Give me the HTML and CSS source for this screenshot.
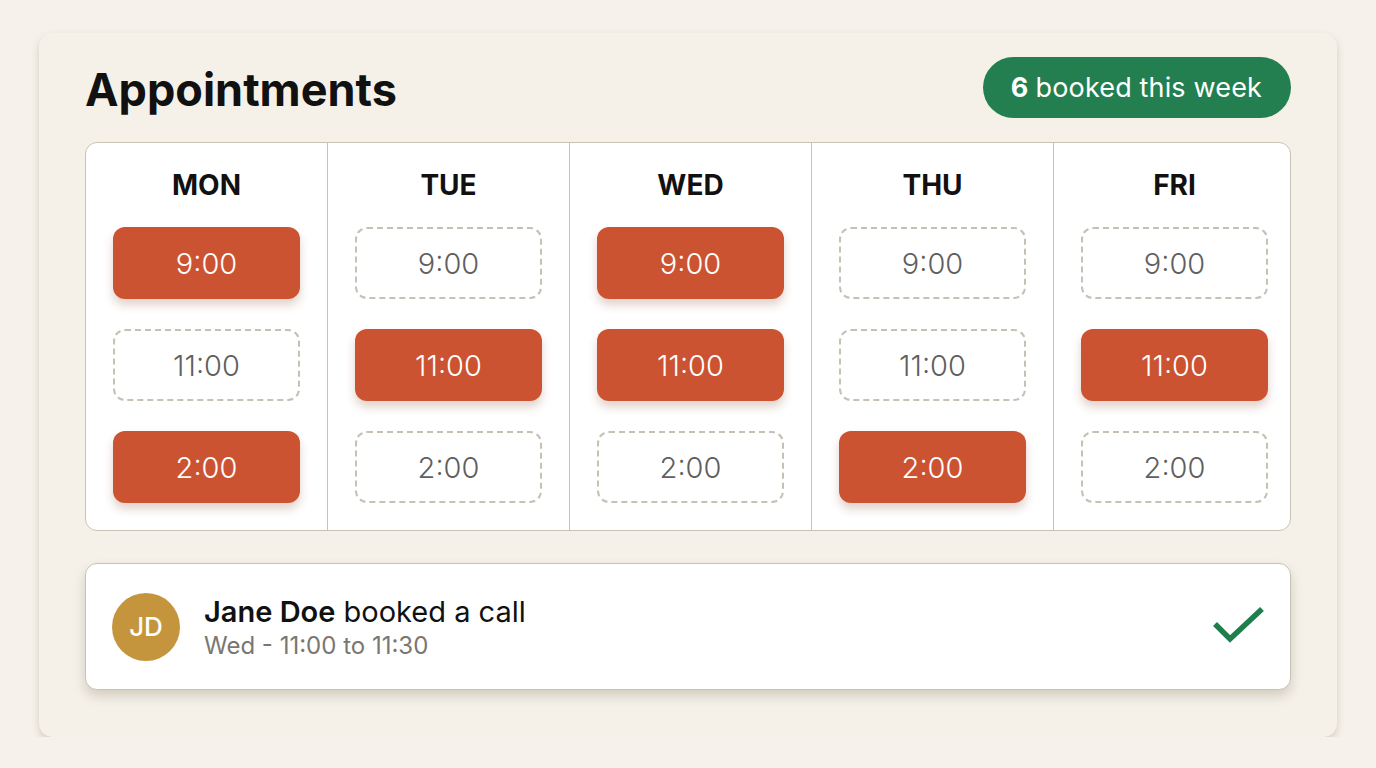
FILE: index.html
```html
<!DOCTYPE html>
<html lang="en">
<head>
<meta charset="utf-8">
<meta name="viewport" content="width=device-width">
<title>Appointments</title>
<link rel="stylesheet" href="styles.css">
</head>
<body>
<main class="card">
  <header class="head">
    <h1>Appointments</h1>
    <span class="badge"><b>6</b> booked this week</span>
  </header>

  <section class="week">
    <div class="day">
      <h2>MON</h2>
      <div class="slot booked">9:00</div>
      <div class="slot">11:00</div>
      <div class="slot booked">2:00</div>
    </div>
    <div class="day">
      <h2>TUE</h2>
      <div class="slot">9:00</div>
      <div class="slot booked">11:00</div>
      <div class="slot">2:00</div>
    </div>
    <div class="day">
      <h2>WED</h2>
      <div class="slot booked">9:00</div>
      <div class="slot booked">11:00</div>
      <div class="slot">2:00</div>
    </div>
    <div class="day">
      <h2>THU</h2>
      <div class="slot">9:00</div>
      <div class="slot">11:00</div>
      <div class="slot booked">2:00</div>
    </div>
    <div class="day">
      <h2>FRI</h2>
      <div class="slot">9:00</div>
      <div class="slot booked">11:00</div>
      <div class="slot">2:00</div>
    </div>
  </section>

  <section class="notice">
    <div class="avatar">JD</div>
    <div class="info">
      <div class="who"><b>Jane Doe</b> booked a call</div>
      <div class="when">Wed - 11:00 to 11:30</div>
    </div>
    <svg class="check" width="56" height="44" viewBox="0 0 56 44">
      <polyline points="4,19 19,34 51,4" fill="none" stroke="#1f7f4c" stroke-width="5.5"/>
    </svg>
  </section>
</main>
</body>
</html>
```

FILE: styles.css
```css
body {
  margin: 0;
  background: #f6f2eb;
  font-family: Inter, "Noto Sans", sans-serif;
  color: #111;
}
.card {
  box-sizing: border-box;
  width: 1298px;
  margin: 33px 0 0 39px;
  padding: 24px 46px 47px 46px;
  background: #f5f1e9;
  border-radius: 14px;
  box-shadow: 0 4px 9px rgba(80, 60, 30, 0.2);
}
.head {
  display: flex;
  justify-content: space-between;
  align-items: center;
  height: 61px;
  margin-bottom: 24px;
}
h1 {
  margin: 4px 0 0;
  font-size: 45px;
  font-weight: 700;
}
.badge {
  display: inline-flex;
  align-items: center;
  height: 61px;
  padding: 0 29px 0 28px;
  border-radius: 31px;
  background: #237f4f;
  color: #fff;
  font-size: 27px;
  letter-spacing: 0.15px;
}
.badge b {
  font-weight: 700;
  margin-right: 7px;
}
.week {
  display: grid;
  grid-template-columns: repeat(5, 1fr);
  height: 389px;
  box-sizing: border-box;
  background: #fff;
  border: 1.5px solid #c9c3b6;
  border-radius: 12px;
  overflow: hidden;
}
.day {
  display: flex;
  flex-direction: column;
  align-items: center;
  padding: 23px 27px 0;
  gap: 30px;
  border-left: 1.5px solid #c9c3b6;
}
.day:first-child {
  border-left: none;
}
.day h2 {
  margin: 2px 0 -5px;
  height: 34px;
  line-height: 34px;
  font-size: 28px;
  font-weight: 700;
}
.slot {
  box-sizing: border-box;
  width: 187px;
  height: 72px;
  display: flex;
  align-items: center;
  justify-content: center;
  border: 2px dashed #c6c0b5;
  border-radius: 12px;
  font-size: 29px;
  font-weight: 300;
  color: #5f5f5f;
}
.slot.booked {
  border: none;
  background: #cc5332;
  color: #fff;
  box-shadow: 0 6px 10px rgba(120, 50, 20, 0.22);
}
.notice {
  display: flex;
  align-items: center;
  height: 127px;
  box-sizing: border-box;
  margin-top: 32px;
  padding: 0 23px 0 26px;
  background: #fff;
  border: 1.5px solid #c9c3b6;
  border-radius: 12px;
  box-shadow: 0 6px 12px rgba(80, 60, 30, 0.2);
}
.avatar {
  width: 68px;
  height: 68px;
  border-radius: 50%;
  background: #c4953c;
  color: #fff;
  display: flex;
  align-items: center;
  justify-content: center;
  font-size: 26px;
  font-weight: 500;
  margin-right: 24px;
}
.info {
  flex: 1;
}
.who {
  font-size: 29px;
  line-height: 36px;
}
.who b {
  font-weight: 600;
}
.when {
  margin-top: 1px;
  font-size: 24px;
  color: #7a7670;
}
```
